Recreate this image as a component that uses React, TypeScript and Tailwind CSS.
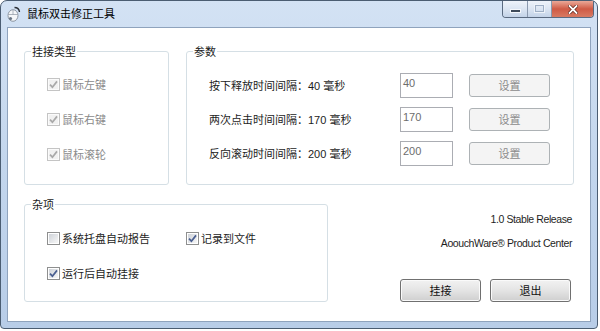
import React from 'react';

const cjk = "font-['Noto_Sans_CJK_SC','Liberation_Sans',sans-serif]";
const latin = "font-['Liberation_Sans',Arial,sans-serif]";

function CheckBox({ checked, disabled }: { checked?: boolean; disabled?: boolean }) {
  return (
    <span
      className={`flex h-[13px] w-[13px] shrink-0 items-center justify-center border ${
        disabled ? 'border-[#c4c4c4] bg-[#fbfbfb]' : 'border-[#8e8f8f] bg-white'
      }`}
    >
      <span
        className={`flex h-[9px] w-[9px] items-center justify-center ${
          disabled ? 'bg-[#f1f1f1]' : 'bg-gradient-to-br from-[#cfd3d9] to-[#f7f7f7]'
        }`}
      >
        {checked && (
          <svg width="9" height="9" viewBox="0 0 9 9" className="overflow-visible">
            <path
              d="M1 4.6 L3.4 7.2 L8 1.4"
              fill="none"
              stroke={disabled ? '#a9a9a9' : '#4a5f90'}
              strokeWidth="1.7"
            />
          </svg>
        )}
      </span>
    </span>
  );
}

function CheckRow({ label, checked, disabled }: { label: string; checked?: boolean; disabled?: boolean }) {
  return (
    <div className="flex h-[14px] items-center gap-[2px]">
      <CheckBox checked={checked} disabled={disabled} />
      <span className={`text-[11px] leading-[14px] ${disabled ? 'text-[#8a8a8a]' : 'text-[#1c1c1c]'}`}>{label}</span>
    </div>
  );
}

function Group({ title, className, children }: { title: string; className: string; children: React.ReactNode }) {
  return (
    <fieldset className={`rounded-[3px] border border-[#d5dfe5] shadow-[inset_1px_1px_0_#ffffff] ${className}`}>
      <legend className="ml-[6px] px-[1px] text-[11px] leading-[14px] text-[#1a1a1a]">{title}</legend>
      {children}
    </fieldset>
  );
}

const params = [
  { label: '按下释放时间间隔：', ms: '40' },
  { label: '两次点击时间间隔：', ms: '170' },
  { label: '反向滚动时间间隔：', ms: '200' },
];

function WinButton({ label, disabled }: { label: string; disabled?: boolean }) {
  return (
    <div
      className={`flex h-[23px] w-[81px] items-center justify-center rounded-[3px] border text-[11px] ${
        disabled
          ? 'border-[#adb2b5] bg-[#f4f4f4] text-[#8b8b8b]'
          : 'border-[#707070] bg-gradient-to-b from-[#f2f2f2] via-[#e4e4e4] to-[#cfcfcf] text-[#111] shadow-[inset_0_0_0_1px_#fafafa]'
      }`}
    >
      {label}
    </div>
  );
}

export default function App() {
  return (
    <div className={`h-[331px] w-[600px] overflow-hidden bg-white ${cjk}`}>
      <div className="flex h-[329px] w-[598px] flex-col rounded-t-[7px] rounded-b-[4px] border border-[#4b5d72] bg-gradient-to-b from-[#d3e2f4] via-[#c3d6ed] to-[#b8cde8]">
        {/* title bar */}
        <div className="flex h-[26px] items-start">
          <svg width="14" height="16" viewBox="0 0 14 16" className="ml-[6px] mt-[5px]">
            <ellipse cx="6" cy="9.5" rx="5" ry="5.8" fill="#f4f6f8" stroke="#8d96a2" strokeWidth="1" />
            <path d="M6 4 V9 M1.2 8.5 H10.8" stroke="#9aa3ad" strokeWidth="0.8" />
            <path d="M7.5 1.5 Q12 1.5 12.5 6" fill="none" stroke="#2a2f36" strokeWidth="1.4" />
            <circle cx="3.5" cy="12.5" r="1.6" fill="#6b7786" />
          </svg>
          <span className="ml-[6px] mt-[5px] text-[11px] leading-[15px] text-black">鼠标双击修正工具</span>
          <div className="ml-auto mr-[3px] flex h-[17px] overflow-hidden rounded-b-[4px] border border-t-0 border-[#5a6a80]">
            <div className="flex w-[25px] items-end justify-center border-r border-[#8a99ae] bg-gradient-to-b from-[#eef3fa] via-[#dbe5f2] to-[#c3d3e8] pb-[4px]">
              <span className="h-[4px] w-[11px] border border-[#f4f7fb] bg-[#3e4a5a]" />
            </div>
            <div className="flex w-[24px] items-center justify-center border-r border-[#8a99ae] bg-gradient-to-b from-[#eef3fa] via-[#dbe5f2] to-[#c3d3e8]">
              <span className="mb-[2px] h-[7px] w-[9px] border border-[#9fb0c6] shadow-[0_0_0_1px_#eef3f9]" />
            </div>
            <div className="flex w-[41px] items-center justify-center bg-gradient-to-b from-[#eaa898] via-[#cf5a45] to-[#d87a62]">
              <svg width="10" height="9" viewBox="0 0 10 9">
                <path d="M1.5 1 L8.5 8 M8.5 1 L1.5 8" stroke="#5a1f14" strokeWidth="3.2" strokeLinecap="square" />
                <path d="M1.5 1 L8.5 8 M8.5 1 L1.5 8" stroke="#ffffff" strokeWidth="1.8" strokeLinecap="square" />
              </svg>
            </div>
          </div>
        </div>

        {/* client area */}
        <div className="mx-[6px] h-[295px] border border-[#8fa3bd] bg-white pl-[16px] pt-[16px]">
          <div className="flex gap-[17px]">
            <Group title="挂接类型" className="h-[141px] w-[145px]">
              <div className="mt-[19px] flex flex-col gap-[21px] pl-[22px]">
                <CheckRow label="鼠标左键" checked disabled />
                <CheckRow label="鼠标右键" checked disabled />
                <CheckRow label="鼠标滚轮" checked disabled />
              </div>
            </Group>
            <Group title="参数" className="h-[141px] w-[388px]">
              <div className="mt-[15px] flex flex-col gap-[9px] pl-[22px]">
                {params.map((p) => (
                  <div key={p.label} className="flex h-[25px] items-center">
                    <span className="w-[191px] text-[11px] text-[#1c1c1c]">
                      {p.label}
                      <span className={latin}>{p.ms} </span>毫秒
                    </span>
                    <div className={`h-[25px] w-[53px] border border-[#abadb3] bg-white pl-[2px] pt-[3px] text-[11px] leading-[13px] text-[#6d6d6d] ${latin}`}>
                      {p.ms}
                    </div>
                    <div className="ml-[16px]">
                      <WinButton label="设置" disabled />
                    </div>
                  </div>
                ))}
              </div>
            </Group>
          </div>

          <div className="mt-[12px] flex">
            <Group title="杂项" className="h-[105px] w-[304px]">
              <div className="mt-[20px] flex flex-col gap-[21px] pl-[22px]">
                <div className="flex">
                  <div className="w-[139px]">
                    <CheckRow label="系统托盘自动报告" />
                  </div>
                  <CheckRow label="记录到文件" checked />
                </div>
                <CheckRow label="运行后自动挂接" checked />
              </div>
            </Group>
            <div className="flex flex-1 flex-col items-end pr-[18px] pt-[15px]">
              <span className={`text-[10.5px] leading-[14px] tracking-[-0.4px] text-[#1e1e1e] ${latin}`}>1.0 Stable Release</span>
              <span className={`mt-[10px] text-[10.5px] leading-[14px] tracking-[-0.4px] text-[#1e1e1e] ${latin}`}>
                AoouchWare® Product Center
              </span>
              <div className="mr-[1px] mt-[29px] flex gap-[9px]">
                <WinButton label="挂接" />
                <WinButton label="退出" />
              </div>
            </div>
          </div>
        </div>
      </div>
    </div>
  );
}
